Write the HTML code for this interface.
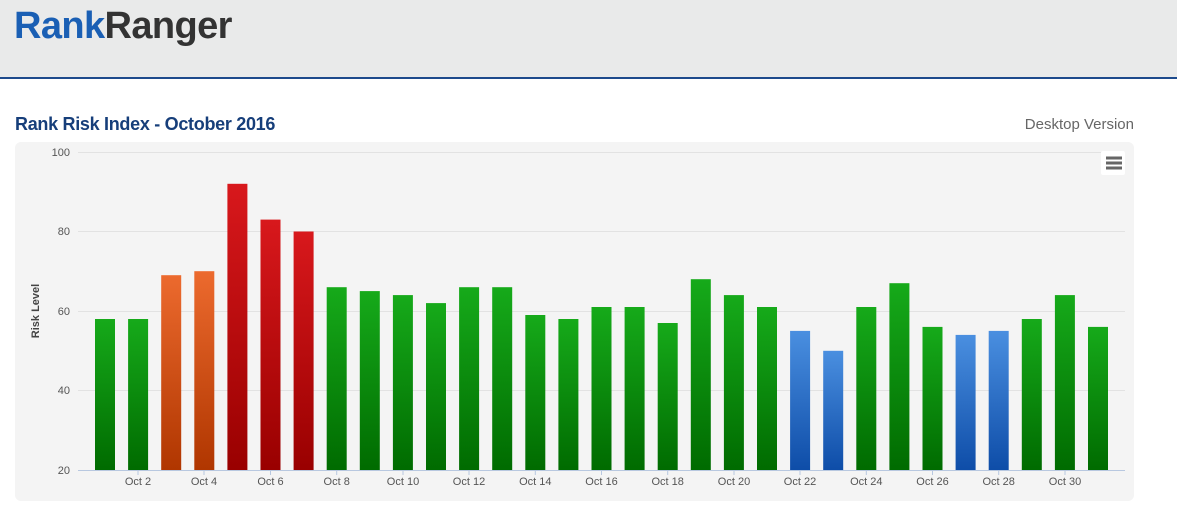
<!DOCTYPE html>
<html><head><meta charset="utf-8"><style>
body{margin:0;width:1177px;height:509px;background:#fff;font-family:"Liberation Sans",sans-serif;overflow:hidden;position:relative}
.hdr{position:absolute;left:0;top:0;width:1177px;height:77px;background:#e9eaea;border-bottom:2px solid #1d4a8c}
.logo{position:absolute;left:14px;top:5px;font-size:38px;font-weight:bold;letter-spacing:-0.6px}
.title{position:absolute;left:15px;top:114px;font-size:18px;font-weight:bold;color:#163e7a;letter-spacing:-0.3px}
.dv{position:absolute;right:43px;top:116px;font-size:15px;color:#666}
.panel{position:absolute;left:15px;top:142px;width:1119px;height:359px;background:#f4f4f4;border-radius:6px}
svg{position:absolute;left:0;top:0}
</style></head><body>
<div class="hdr"><div class="logo"><span style="color:#1a5fb4">Rank</span><span style="color:#333">Ranger</span></div></div>
<div class="title">Rank Risk Index - October 2016</div>
<div class="dv">Desktop Version</div>
<div class="panel"></div>
<svg width="1177" height="509" font-family="Liberation Sans, sans-serif">
<defs>
<linearGradient id="g" x1="0" y1="0" x2="0" y2="1"><stop offset="0" stop-color="#16aa1a"/><stop offset="1" stop-color="#006b00"/></linearGradient>
<linearGradient id="o" x1="0" y1="0" x2="0" y2="1"><stop offset="0" stop-color="#ec6a2e"/><stop offset="1" stop-color="#b03600"/></linearGradient>
<linearGradient id="r" x1="0" y1="0" x2="0" y2="1"><stop offset="0" stop-color="#d8181c"/><stop offset="1" stop-color="#990000"/></linearGradient>
<linearGradient id="b" x1="0" y1="0" x2="0" y2="1"><stop offset="0" stop-color="#4a8fe0"/><stop offset="1" stop-color="#0e4da8"/></linearGradient>
</defs>
<g stroke="#e2e2e2" stroke-width="1">
<line x1="78" y1="152.5" x2="1125" y2="152.5"/><line x1="78" y1="231.5" x2="1125" y2="231.5"/><line x1="78" y1="311.5" x2="1125" y2="311.5"/><line x1="78" y1="390.5" x2="1125" y2="390.5"/>
</g>
<g font-size="11" fill="#555" text-anchor="end">
<text x="70" y="156">100</text><text x="70" y="235">80</text><text x="70" y="315">60</text><text x="70" y="394">40</text><text x="70" y="474">20</text>
</g>
<text transform="translate(39,311) rotate(-90)" font-size="11" font-weight="bold" fill="#444" text-anchor="middle">Risk Level</text>
<g>
<rect x="95" y="319" width="20" height="151" fill="url(#g)"/>
<rect x="128.1" y="319" width="20" height="151" fill="url(#g)"/>
<rect x="161.2" y="275.2" width="20" height="194.8" fill="url(#o)"/>
<rect x="194.3" y="271.2" width="20" height="198.8" fill="url(#o)"/>
<rect x="227.4" y="183.8" width="20" height="286.2" fill="url(#r)"/>
<rect x="260.5" y="219.6" width="20" height="250.4" fill="url(#r)"/>
<rect x="293.6" y="231.5" width="20" height="238.5" fill="url(#r)"/>
<rect x="326.7" y="287.2" width="20" height="182.8" fill="url(#g)"/>
<rect x="359.8" y="291.1" width="20" height="178.9" fill="url(#g)"/>
<rect x="392.9" y="295.1" width="20" height="174.9" fill="url(#g)"/>
<rect x="426" y="303.1" width="20" height="166.9" fill="url(#g)"/>
<rect x="459.1" y="287.2" width="20" height="182.8" fill="url(#g)"/>
<rect x="492.2" y="287.2" width="20" height="182.8" fill="url(#g)"/>
<rect x="525.3" y="315" width="20" height="155" fill="url(#g)"/>
<rect x="558.4" y="319" width="20" height="151" fill="url(#g)"/>
<rect x="591.5" y="307" width="20" height="163" fill="url(#g)"/>
<rect x="624.6" y="307" width="20" height="163" fill="url(#g)"/>
<rect x="657.7" y="323" width="20" height="147" fill="url(#g)"/>
<rect x="690.8" y="279.2" width="20" height="190.8" fill="url(#g)"/>
<rect x="723.9" y="295.1" width="20" height="174.9" fill="url(#g)"/>
<rect x="757" y="307" width="20" height="163" fill="url(#g)"/>
<rect x="790.1" y="330.9" width="20" height="139.1" fill="url(#b)"/>
<rect x="823.2" y="350.8" width="20" height="119.2" fill="url(#b)"/>
<rect x="856.3" y="307" width="20" height="163" fill="url(#g)"/>
<rect x="889.4" y="283.2" width="20" height="186.8" fill="url(#g)"/>
<rect x="922.5" y="326.9" width="20" height="143.1" fill="url(#g)"/>
<rect x="955.6" y="334.9" width="20" height="135.1" fill="url(#b)"/>
<rect x="988.7" y="330.9" width="20" height="139.1" fill="url(#b)"/>
<rect x="1021.8" y="319" width="20" height="151" fill="url(#g)"/>
<rect x="1054.9" y="295.1" width="20" height="174.9" fill="url(#g)"/>
<rect x="1088" y="326.9" width="20" height="143.1" fill="url(#g)"/>
</g>
<line x1="78" y1="470.5" x2="1125" y2="470.5" stroke="#b8c8e0"/>
<g stroke="#b8c8e0">
<line x1="138" y1="470" x2="138" y2="475"/><line x1="204" y1="470" x2="204" y2="475"/><line x1="270.5" y1="470" x2="270.5" y2="475"/><line x1="336.7" y1="470" x2="336.7" y2="475"/><line x1="403" y1="470" x2="403" y2="475"/><line x1="469" y1="470" x2="469" y2="475"/><line x1="535.3" y1="470" x2="535.3" y2="475"/><line x1="601.5" y1="470" x2="601.5" y2="475"/><line x1="667.7" y1="470" x2="667.7" y2="475"/><line x1="734" y1="470" x2="734" y2="475"/><line x1="800" y1="470" x2="800" y2="475"/><line x1="866.3" y1="470" x2="866.3" y2="475"/><line x1="932.5" y1="470" x2="932.5" y2="475"/><line x1="998.7" y1="470" x2="998.7" y2="475"/><line x1="1065" y1="470" x2="1065" y2="475"/>
</g>
<g font-size="11" fill="#555" text-anchor="middle">
<text x="138" y="485">Oct 2</text><text x="204" y="485">Oct 4</text><text x="270.5" y="485">Oct 6</text><text x="336.7" y="485">Oct 8</text><text x="403" y="485">Oct 10</text><text x="469" y="485">Oct 12</text><text x="535.3" y="485">Oct 14</text><text x="601.5" y="485">Oct 16</text><text x="667.7" y="485">Oct 18</text><text x="734" y="485">Oct 20</text><text x="800" y="485">Oct 22</text><text x="866.3" y="485">Oct 24</text><text x="932.5" y="485">Oct 26</text><text x="998.7" y="485">Oct 28</text><text x="1065" y="485">Oct 30</text>
</g>
<rect x="1101" y="151" width="24" height="24" fill="#fff" rx="2"/>
<g stroke="#666" stroke-width="3"><line x1="1106" y1="158" x2="1122" y2="158"/><line x1="1106" y1="163" x2="1122" y2="163"/><line x1="1106" y1="168" x2="1122" y2="168"/></g>
</svg>
</body></html>
